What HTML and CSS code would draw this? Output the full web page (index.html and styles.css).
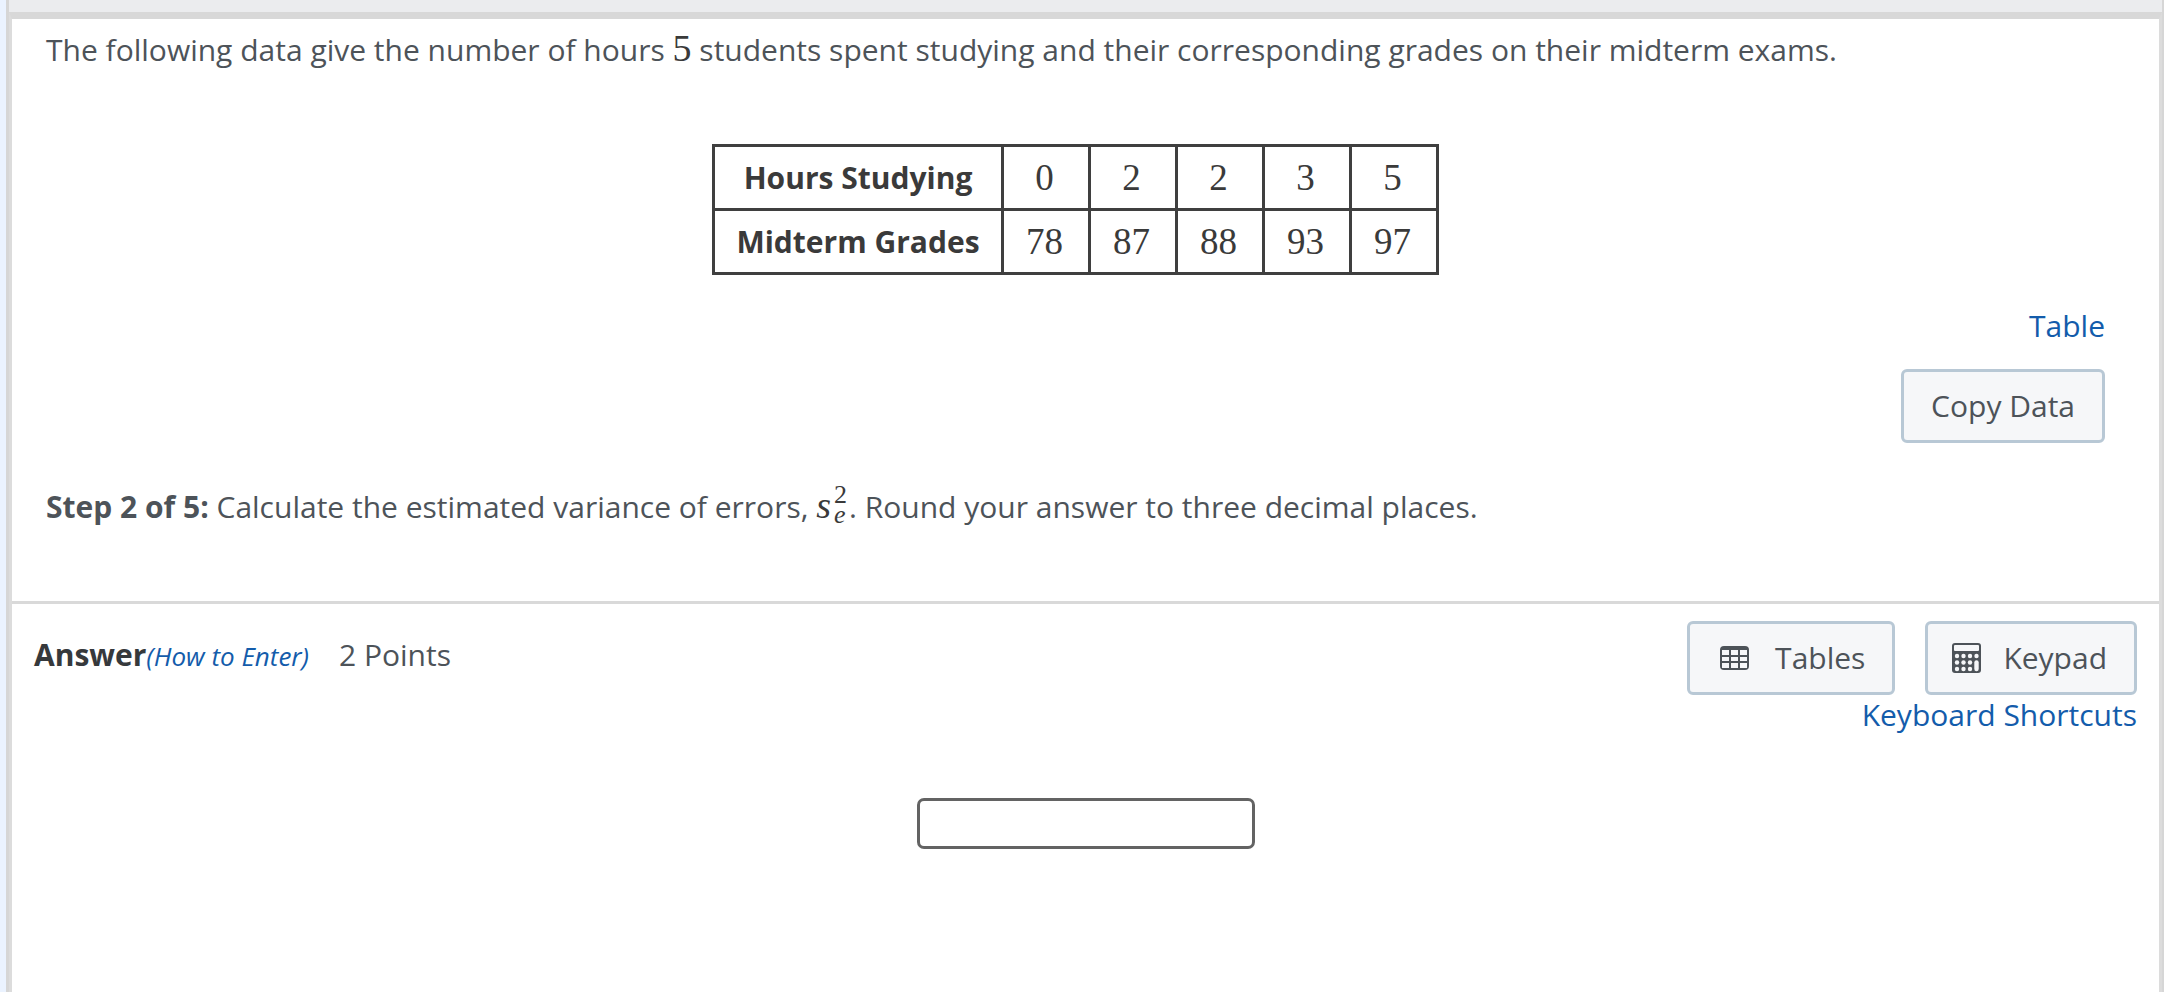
FILE: index.html
```html
<!DOCTYPE html>
<html lang="en">
<head>
  <meta charset="UTF-8" />
  <meta name="viewport" content="width=device-width, initial-scale=1.0"/>
  <title>Midterm Grades</title>
  <link rel="stylesheet" href="styles.css">
</head>
<body>

  <div class="page">
    <div class="top-bar"></div>

    <main class="panel">
      <section class="question">
        <p class="text">The following data give the number of hours <span class="math">5</span> students spent studying and their corresponding grades on their midterm exams.</p>

        <table class="data-table">
          <tr>
            <th scope="row">Hours Studying</th>
            <td>0</td>
            <td>2</td>
            <td>2</td>
            <td>3</td>
            <td>5</td>
          </tr>
          <tr>
            <th scope="row">Midterm Grades</th>
            <td>78</td>
            <td>87</td>
            <td>88</td>
            <td>93</td>
            <td>97</td>
          </tr>
        </table>

        <div class="data-actions">
          <a href="#" class="link">Table</a>
          <button type="button" class="btn">Copy Data</button>
        </div>

        <p class="text step"><b>Step 2 of 5:</b> Calculate the estimated variance of errors, <span class="variance"><i>s</i><span class="scripts"><span>2</span><i>e</i></span></span>. Round your answer to three decimal places.</p>
      </section>

      <section class="answer">
        <div class="answer-header">
          <div class="answer-title">
            <label for="answer" class="answer-label">Answer</label><a href="#" class="how-to">(How to Enter)</a>
            <span class="points">2 Points</span>
          </div>

          <div class="tools">
            <div class="tool-buttons">
              <button type="button" class="btn btn-tables">
                <svg class="icon" viewBox="3 0 29 32" aria-hidden="true">
                  <rect x="3" y="4" width="29" height="24" rx="4" fill="#4d5359"/>
                  <g fill="#f6f7f9">
                    <rect x="5" y="8" width="7" height="5"/>
                    <rect x="14" y="8" width="7" height="5"/>
                    <rect x="23" y="8" width="7" height="5"/>
                    <rect x="5" y="15" width="7" height="4"/>
                    <rect x="14" y="15" width="7" height="4"/>
                    <rect x="23" y="15" width="7" height="4"/>
                    <rect x="5" y="21" width="7" height="5"/>
                    <rect x="14" y="21" width="7" height="5"/>
                    <rect x="23" y="21" width="7" height="5"/>
                  </g>
                </svg>
                Tables
              </button>
              <button type="button" class="btn btn-keypad">
                <svg class="icon" viewBox="3 0 29 32" aria-hidden="true">
                  <rect x="3" y="1" width="29" height="30" rx="3" fill="#4d5359"/>
                  <g fill="#f6f7f9">
                    <rect x="5" y="3" width="25" height="6" rx="1"/>
                    <circle cx="8" cy="14" r="2.2"/>
                    <circle cx="14.5" cy="14" r="2.2"/>
                    <circle cx="21" cy="14" r="2.2"/>
                    <circle cx="27.5" cy="14" r="2.2"/>
                    <circle cx="8" cy="20.5" r="2.2"/>
                    <circle cx="14.5" cy="20.5" r="2.2"/>
                    <circle cx="21" cy="20.5" r="2.2"/>
                    <circle cx="8" cy="27" r="2.2"/>
                    <circle cx="14.5" cy="27" r="2.2"/>
                    <circle cx="21" cy="27" r="2.2"/>
                    <rect x="25.3" y="18.3" width="4.4" height="11" rx="2.2"/>
                  </g>
                </svg>
                Keypad
              </button>
            </div>
            <a href="#" class="link">Keyboard Shortcuts</a>
          </div>
        </div>

        <input type="text" id="answer" class="answer-input">
      </section>
    </main>
  </div>

</body>
</html>
```

FILE: styles.css
```css
* {
  box-sizing: border-box;
}

body {
  margin: 0;
  background: #ebf3ff;
  color: #4d5359;
  font-family: 'Open Sans', sans-serif;
  font-size: 30px;
  line-height: 40px;
}

.page {
  display: flex;
  flex-direction: column;
  min-height: 100vh;
  margin-left: 6px;
  border-left: 3px solid #d6d6d6;
  border-right: 2px solid #d6d6d6;
}

.top-bar {
  height: 12px;
  background: #ebecee;
}

.panel {
  flex: 1;
  background: #fff;
  border: 3px solid #dcdcdc;
  border-top: 7px solid #d8d8d8;
  border-bottom: 0;
}

.question {
  padding: 10px 54px 74px 34px;
  border-bottom: 3px solid #d9d9d9;
}

.text {
  margin: 0;
}

.math {
  color: #3a3a3a;
  font-family: 'Liberation Serif', serif;
  font-size: 38px;
  line-height: 1;
}

.data-table {
  margin: 74px auto 31px;
  border-collapse: collapse;
  color: #3a3a3a;
}

.data-table th,
.data-table td {
  height: 64px;
  padding: 0 21px;
  border: 3px solid #3f3f3f;
  text-align: center;
}

.data-table th {
  min-width: 289px;
  font-weight: 700;
}

.data-table td {
  min-width: 87px;
  padding: 0 3px 0 0;
  font-family: 'Liberation Serif', serif;
  font-size: 37px;
}

.data-actions {
  display: flex;
  flex-direction: column;
  align-items: flex-end;
  gap: 23px;
}

.link {
  color: #135cab;
  text-decoration: none;
}

.btn {
  display: flex;
  align-items: center;
  gap: 26px;
  height: 74px;
  padding: 0 27px;
  border: 3px solid #b8c8d5;
  border-radius: 6px;
  background: #f6f7f9;
  color: #4d5359;
  font: inherit;
  cursor: pointer;
}

.btn:hover {
  background: #e9edf2;
}

.btn-tables {
  padding-left: 30px;
}

.btn-keypad {
  gap: 22px;
  padding-left: 24px;
}

.step {
  margin-top: 42px;
}

.variance {
  display: inline-flex;
  align-items: center;
  gap: 3px;
  margin-right: 2px;
  color: #3a3a3a;
  font-family: 'Liberation Serif', serif;
  font-size: 38px;
}

.scripts {
  display: flex;
  flex-direction: column;
  font-size: 26px;
  line-height: 20px;
}

.answer {
  display: flex;
  flex-direction: column;
  align-items: center;
  padding: 17px 22px;
}

.answer-header {
  display: flex;
  justify-content: space-between;
  width: 100%;
}

.answer-title {
  display: flex;
  align-items: baseline;
  padding-top: 14px;
}

.answer-label {
  color: #36393c;
  font-weight: 700;
}

.how-to {
  color: #135cab;
  font-size: 26px;
  font-style: italic;
  text-decoration: none;
}

.points {
  margin-left: 30px;
}

.tools {
  display: flex;
  flex-direction: column;
  align-items: flex-end;
}

.tool-buttons {
  display: flex;
  gap: 30px;
}

.icon {
  width: 29px;
  height: 32px;
}

.answer-input {
  width: 338px;
  height: 51px;
  margin-top: 63px;
  padding: 0 10px;
  border: 3px solid #636363;
  border-radius: 7px;
  background: #fff;
  color: #3a3a3a;
  font: inherit;
}
```
